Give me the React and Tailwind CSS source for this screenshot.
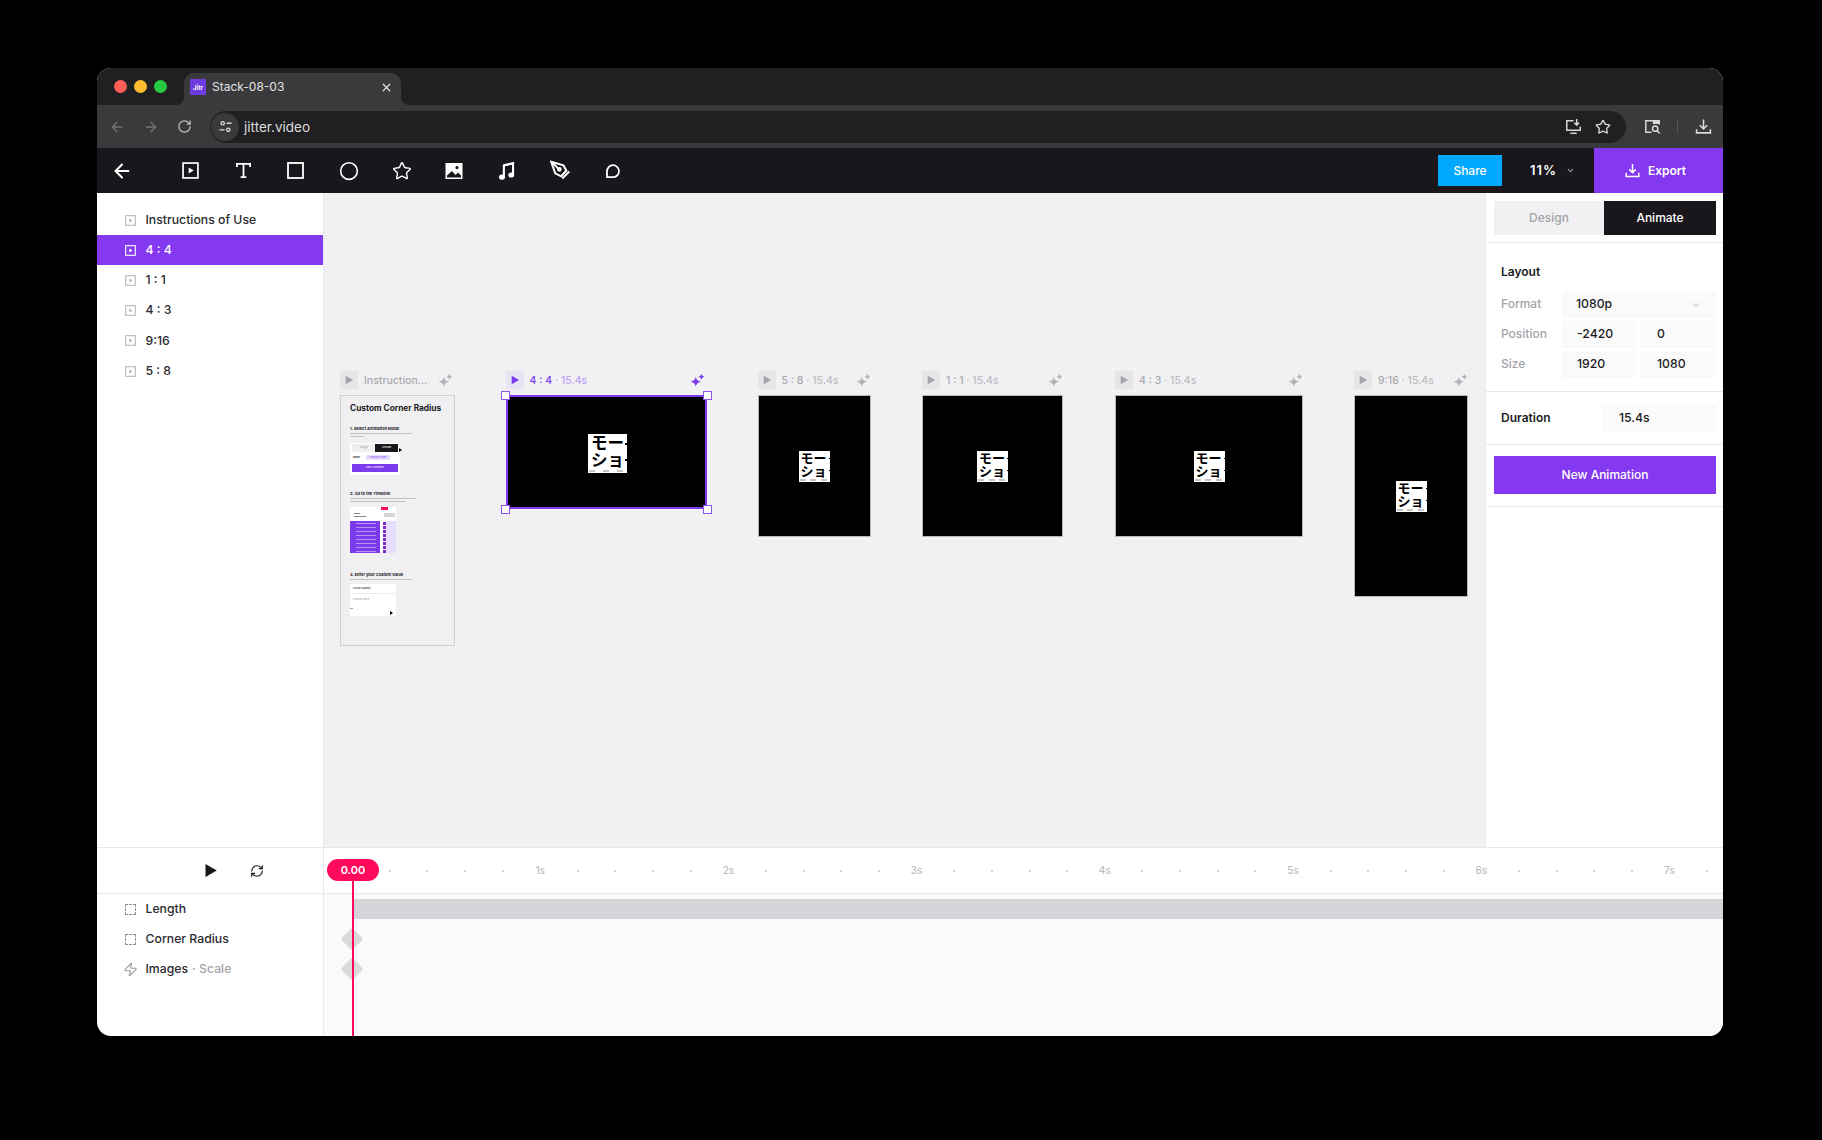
import React from 'react';
import { ArrowLeft, ArrowRight, RotateCw, Star, Circle, X, ChevronDown, RefreshCw, Zap } from 'lucide-react';

const SIDEBAR = ['Instructions of Use', '4 : 4', '1 : 1', '4 : 3', '9:16', '5 : 8'];

const FRAMES = [
  { label: '5 : 8', w: 'w-[113px]', h: 'h-[142px]' },
  { label: '1 : 1', w: 'w-[141px]', h: 'h-[142px]' },
  { label: '4 : 3', w: 'w-[188px]', h: 'h-[142px]' },
  { label: '9:16', w: 'w-[114px]', h: 'h-[202px]' },
];

function FrameIcon({ className }) {
  return (
    <svg viewBox="0 0 16 16" className={className} fill="none">
      <rect x="1" y="1" width="14" height="14" stroke="currentColor" strokeWidth="1.6" />
      <path d="M6.3 5.2v5.6L11 8z" fill="currentColor" />
    </svg>
  );
}

function Sparkle({ className }) {
  return (
    <svg viewBox="0 0 16 16" className={className} fill="currentColor">
      <path d="M6.200 4c.6 3 1.500 4.100 5.400 5.300-3.900 1.200-4.800 2.300-5.400 5.700-.6-3.400-1.500-4.500-5.400-5.700C4.700 8.100 5.600 7 6.200 4z" />
      <path d="M12.200.5c.4 2 1 2.700 3.300 3.400-2.300.7-2.900 1.400-3.300 3.500-.4-2.100-1-2.800-3.300-3.500C11.200 3.200 11.800 2.500 12.200.5z" />
    </svg>
  );
}

function PlayTri({ className }) {
  return (
    <svg viewBox="0 0 12 12" className={className} fill="currentColor">
      <path d="M2 .8v10.400L11 6z" />
    </svg>
  );
}

function FrameHeader({ label, active, width }) {
  const parts = label.split('|');
  return (
    <div className={`flex items-center h-[18px] mb-[6px] ${width}`}>
      <div className={`w-[18px] h-[18px] flex items-center justify-center ${active ? 'bg-[#e6e3f3] text-[#7c3aed]' : 'bg-[#e6e6e8] text-[#a6a6aa]'}`}>
        <PlayTri className="w-[10px] h-[10px]" />
      </div>
      <span className={`ml-[6px] mt-[1px] text-[10.500px] font-medium whitespace-nowrap ${active ? 'text-[#7c3aed]' : 'text-[#a9a9ad]'}`}>
        {parts[0]}
        {parts[1] && <span className={active ? 'text-[#c0a4f2]' : 'text-[#bdbdc1]'}> · {parts[1]}</span>}
      </span>
      <Sparkle className={`ml-auto w-[15px] h-[15px] ${active ? 'text-[#7c3aed]' : 'text-[#b4b4b8]'}`} />
    </div>
  );
}

// white motion tile shown in the middle of each frame
function Tile({ big }) {
  return (
    <div className={`relative bg-white text-black font-bold [font-family:'Noto_Sans_CJK_JP',sans-serif] ${big ? 'ml-[3px] mt-[3px] w-[39px] h-[39px] pl-[3px] text-[16.500px] leading-[17px]' : 'w-[31px] h-[31px] pl-[2px] text-[13px] leading-[13.500px]'}`}>
      <div className="whitespace-nowrap">モー</div>
      <div className="whitespace-nowrap">ショ</div>
      <div className={`absolute right-0 top-[24%] bg-black ${big ? 'w-[2px] h-[2px]' : 'w-[1px] h-[1px]'}`} />
      <div className={`absolute right-0 top-[64%] bg-black ${big ? 'w-[2px] h-[2px]' : 'w-[1px] h-[1px]'}`} />
      <div className={`absolute left-[1px] bottom-[1px] flex justify-between ${big ? 'w-[34px]' : 'w-[27px]'}`}>
        <div className="w-[6px] h-[2px] bg-[#c4c4c4]" />
        <div className="w-[6px] h-[2px] bg-[#c4c4c4]" />
        <div className="w-[6px] h-[2px] bg-[#c4c4c4]" />
      </div>
    </div>
  );
}

function Handle({ className }) {
  return <div className={`absolute w-[9px] h-[9px] bg-white border border-[#8b55ee] ${className}`} />;
}

function MiniHead({ children }) {
  return <div className="text-[4px] leading-[5px] font-bold text-[#1a1a1a] whitespace-nowrap">{children}</div>;
}

function MiniLines({ widths }) {
  return (
    <div className="mt-[2px] flex flex-col gap-[2px]">
      {widths.map((w, i) => (
        <div key={i} className={`h-[1px] bg-[#c2c2c6] ${w}`} />
      ))}
    </div>
  );
}

// tiny preview of the instructions artboard
function InstructionsDoc() {
  return (
    <div className="w-[115px] h-[251px] shrink-0 bg-[#f0f0f2] border border-[#cfcfd2] pl-[9px] pt-[7px] overflow-hidden">
      <div className="text-[8.300px] leading-[11px] font-bold text-[#1a1a1c] whitespace-nowrap">Custom Corner Radius</div>

      <div className="mt-[12px]"><MiniHead>1. Select Animation Mode</MiniHead></div>
      <MiniLines widths={['w-[62px]', 'w-[14px]']} />
      <div className="relative mt-[6px] w-[50px] h-[32px] bg-white pt-[1px] px-[2px]">
        <div className="flex h-[8px] text-[2.500px]">
          <div className="w-[23px] bg-[#f0f0f2] text-[#999] flex items-center justify-center">Design</div>
          <div className="w-[23px] bg-[#18181b] text-white flex items-center justify-center">Animate</div>
        </div>
        <div className="flex items-center mt-[3px] ml-[1px] h-[5px] text-[2.500px]">
          <span className="w-[13px] font-bold text-[#333]">Mode</span>
          <div className="w-[24px] h-[5px] bg-[#e6dcfb] text-[#7c3aed] flex items-center justify-center">Explore Mode</div>
        </div>
        <div className="mt-[4px] h-[8px] bg-[#7c3aed] text-[2.500px] text-white flex items-center justify-center">New Animation</div>
        <div className="absolute -right-[2px] top-[5px] w-0 h-0 border-y-[2px] border-l-[3px] border-y-transparent border-l-black" />
      </div>

      <div className="mt-[16px]"><MiniHead>2. Go to the Timeline</MiniHead></div>
      <MiniLines widths={['w-[66px]', 'w-[56px]']} />
      <div className="mt-[5px] w-[46px] h-[46px] bg-white flex flex-col">
        <div className="h-[14px] flex">
          <div className="w-[30px] pl-[4px] pt-[6px] flex flex-col gap-[2px]">
            <div className="w-[6px] h-[1px] bg-[#888]" />
            <div className="w-[12px] h-[1px] bg-[#888]" />
          </div>
          <div className="ml-[1px]">
            <div className="w-[7px] h-[3px] bg-[#ff0a5c]" />
            <div className="mt-[3px] ml-[3px] w-[11px] h-[4px] bg-[#d5d5d9]" />
          </div>
        </div>
        <div className="flex-1 flex">
          <div className="w-[30px] bg-[#7c3aed] flex flex-col justify-around pl-[6px]">
            {[0, 1, 2, 3, 4, 5, 6, 7].map((i) => (
              <div key={i} className="w-[20px] h-[1px] bg-[#b896f5]" />
            ))}
          </div>
          <div className="w-[3px]" />
          <div className="w-[3px] flex flex-col justify-around">
            {[0, 1, 2, 3, 4, 5, 6, 7].map((i) => (
              <div key={i} className="w-[3px] h-[3px] bg-[#7c2ad0]" />
            ))}
          </div>
          <div className="flex-1 bg-[#e6dcfb]" />
        </div>
      </div>

      <div className="mt-[19px]"><MiniHead>3. Enter your Custom Value</MiniHead></div>
      <MiniLines widths={['w-[62px]']} />
      <div className="relative mt-[4px] w-[46px] h-[32px] bg-white text-[2.500px] text-[#555]">
        <div className="h-[10px] border-b border-[#ececee] pl-[3px] flex items-center font-bold">Corner Radius</div>
        <div className="h-[11px] pl-[3px] flex items-center text-[#999]">Custom value</div>
        <div className="pl-[3px] w-[3px] h-[1px] mt-[3px] bg-[#aaa]" />
        <div className="absolute right-[3px] bottom-[1px] w-0 h-0 border-y-[2px] border-l-[3px] border-y-transparent border-l-black" />
      </div>
    </div>
  );
}

function Field({ className, value }) {
  return <div className={`h-[27px] bg-[#fafafa] flex items-center text-[12.250px] font-medium text-[#1c1c1f] ${className}`}>{value}</div>;
}

export default function App() {
  const ticks = Array.from({ length: 37 }, (_, i) => i);

  return (
    <div className="w-[1822px] h-[1140px] bg-black pt-[68px] pl-[97px] overflow-hidden [font-family:Inter,sans-serif]">
      <div className="w-[1626px] h-[968px] rounded-[14px] overflow-hidden bg-white flex flex-col">
        {/* Tab strip */}
        <div className="h-[37px] shrink-0 bg-[#202022] flex items-end">
          <div className="flex items-center gap-[7px] w-[87px] h-full pl-[17px]">
            <div className="w-[13px] h-[13px] rounded-full bg-[#ff5f57]" />
            <div className="w-[13px] h-[13px] rounded-full bg-[#febc2e]" />
            <div className="w-[13px] h-[13px] rounded-full bg-[#28c840]" />
          </div>
          <div className="relative w-[217px] h-[32px] bg-[#3a3a3c] rounded-t-[10px] flex items-center pl-[6px] pr-[8px] pb-[4px]">
            <div className="w-[16px] h-[16px] bg-[#6d3be0] flex items-center justify-center text-[6px] font-bold text-white">Jitr</div>
            <span className="ml-[6px] text-[12px] text-[#e4e4e6]">Stack-08-03</span>
            <X className="ml-auto w-[13px] h-[13px] text-[#e4e4e6]" strokeWidth={2.2} />
            <div className="absolute -left-[8px] bottom-0 w-[8px] h-[8px] bg-[#3a3a3c]">
              <div className="w-full h-full bg-[#202022] rounded-br-[8px]" />
            </div>
            <div className="absolute -right-[8px] bottom-0 w-[8px] h-[8px] bg-[#3a3a3c]">
              <div className="w-full h-full bg-[#202022] rounded-bl-[8px]" />
            </div>
          </div>
        </div>

        {/* Browser bar */}
        <div className="h-[43px] shrink-0 bg-[#3a3a3c] flex items-center">
          <div className="flex items-center w-[113px] pl-[12px]">
            <ArrowLeft className="w-[16px] h-[16px] text-[#747476]" />
            <ArrowRight className="ml-[18px] w-[16px] h-[16px] text-[#747476]" />
            <RotateCw className="ml-[18px] w-[15px] h-[15px] text-[#bdbdbf]" />
          </div>
          <div className="w-[1416px] h-[32px] rounded-full bg-[#202022] flex items-center pl-[1px]">
            <div className="w-[28px] h-[28px] rounded-full bg-[#3a3a3c] flex items-center justify-center">
              <svg viewBox="0 0 16 16" className="w-[15px] h-[15px] text-[#d8d8da]" fill="none" stroke="currentColor" strokeWidth="1.4">
                <circle cx="5" cy="4.500" r="1.800" />
                <path d="M9 4.500h5.500M1.500 11.500H7" />
                <circle cx="11" cy="11.500" r="1.800" />
              </svg>
            </div>
            <span className="ml-[5px] mt-[1px] text-[13.500px] text-[#dcdcde]">jitter.video</span>
            <svg viewBox="0 0 16 16" className="ml-auto w-[17px] h-[17px] text-[#d8d8da]" fill="none" stroke="currentColor" strokeWidth="1.400">
              <path d="M8 2.500H1.700v9h12.600V8M5 14.300h6M11 1v5.500M8.800 4.500 11 6.700l2.200-2.200" />
            </svg>
            <Star className="ml-[13px] mr-[15px] w-[16px] h-[16px] text-[#d8d8da]" strokeWidth={2} />
          </div>
          <svg viewBox="0 0 16 16" className="ml-[18px] w-[17px] h-[17px] text-[#d8d8da]" fill="none" stroke="currentColor" strokeWidth="1.400">
            <path d="M7 13.500H1.700v-11h12.600V6" />
            <path d="M9 2.500h5.300v2.500H9z" fill="currentColor" />
            <circle cx="10.500" cy="10" r="2.500" />
            <path d="m12.500 12 2.300 2.500" />
          </svg>
          <div className="ml-[16px] w-[1px] h-[15px] bg-[#55555a]" />
          <svg viewBox="0 0 16 16" className="ml-[17px] w-[17px] h-[17px] text-[#d8d8da]" fill="none" stroke="currentColor" strokeWidth="1.500">
            <path d="M8 1.500v8.500M4.500 6.800 8 10.300l3.500-3.500M1.500 10.500v3.500h13v-3.500" />
          </svg>
        </div>

        {/* App toolbar */}
        <div className="h-[45px] shrink-0 bg-[#19171b] flex items-center text-white">
          <ArrowLeft className="ml-[14px] w-[22px] h-[22px]" strokeWidth={2.200} />
          <div className="ml-[31px] flex items-center">
            <div className="w-[52.800px] flex justify-center"><FrameIcon className="w-[17px] h-[17px]" /></div>
            <div className="w-[52.800px] flex justify-center">
              <svg viewBox="0 0 16 16" className="w-[17px] h-[17px]" fill="none" stroke="currentColor" strokeWidth="1.700">
                <path d="M1.800 4.800V1.700h12.400v3.100M8 1.700v12.600M5.300 14.300h5.400" />
              </svg>
            </div>
            <div className="w-[52.800px] flex justify-center">
              <svg viewBox="0 0 17 17" className="w-[17px] h-[17px]" fill="none" stroke="currentColor" strokeWidth="1.800">
                <rect x="1" y="1" width="15" height="15" />
              </svg>
            </div>
            <div className="w-[52.800px] flex justify-center"><Circle className="w-[20px] h-[20px]" strokeWidth={1.900} /></div>
            <div className="w-[52.800px] flex justify-center"><Star className="w-[20px] h-[20px]" strokeWidth={1.700} /></div>
            <div className="w-[52.800px] flex justify-center">
              <svg viewBox="0 0 17 16" className="w-[18px] h-[16px]" fill="currentColor">
                <path fillRule="evenodd" d="M0 0h17v16H0zM11.500 3a1.600 1.600 0 1 0 0 3.200 1.600 1.600 0 0 0 0-3.200zM1.500 12.500v2h14v-2l-3-3-2.500 2.500-3.500-4z" />
              </svg>
            </div>
            <div className="w-[52.800px] flex justify-center">
              <svg viewBox="0 0 16 18" className="-ml-[1px] w-[17px] h-[19px]" fill="currentColor">
                <path d="M4.500 3.200 15.200.8v12.700h-2V3.500L6.500 5v10.500h-2z" />
                <ellipse cx="3.700" cy="15.300" rx="2.800" ry="2.400" />
                <ellipse cx="12.500" cy="13.300" rx="2.800" ry="2.400" />
              </svg>
            </div>
            <div className="w-[52.800px] flex justify-center">
              <svg viewBox="0 0 18 18" className="ml-[2px] w-[21px] h-[21px]" fill="none" stroke="currentColor" strokeWidth="1.700">
                <path d="M1 1.500 11.500 4.500 14 9l-4.500 5-5-2.500z" />
                <circle cx="8" cy="8" r="1.200" />
                <path d="M1.500 2 7 7.200M10.500 15.800l6-6" />
              </svg>
            </div>
            <div className="w-[52.800px] flex justify-center">
              <svg viewBox="0 0 16 16" className="w-[16px] h-[16px]" fill="none" stroke="currentColor" strokeWidth="1.800">
                <path d="M2 14.200h6.500a6 6 0 1 0-6.500-6z" strokeLinejoin="round" />
              </svg>
            </div>
          </div>
          <button className="ml-auto w-[64px] h-[31px] bg-[#00a8ff] text-[12px] font-medium text-white">Share</button>
          <div className="w-[92px] pl-[9px] flex items-center justify-center gap-[9px] text-[13px] font-semibold">
            <span className="tracking-[1px]">11%</span>
            <ChevronDown className="w-[9px] h-[9px] text-[#9b9b9f]" strokeWidth={3} />
          </div>
          <button className="w-[129px] h-full pr-[6px] bg-[#8439f0] flex items-center justify-center gap-[8px] text-[12px] font-semibold">
            <svg viewBox="0 0 16 16" className="w-[15px] h-[15px]" fill="none" stroke="currentColor" strokeWidth="1.600">
              <path d="M8 1v9M4.500 6.800 8 10.300l3.500-3.500M1.300 10.500v4h13.400v-4" />
            </svg>
            Export
          </button>
        </div>

        {/* Main area */}
        <div className="h-[654px] shrink-0 flex">
          <div className="w-[227px] shrink-0 border-r border-[#e8e8ea] pt-[12px]">
            {SIDEBAR.map((name) => {
              const active = name === '4 : 4';
              return (
                <div key={name} className={`h-[30.200px] flex items-center pl-[28px] text-[12.250px] font-medium ${active ? 'bg-[#8439f0] text-white' : 'text-[#2a2a2e]'}`}>
                  <FrameIcon className={`w-[11px] h-[11px] ${active ? 'text-white' : 'text-[#b8b8bb]'}`} />
                  <span className="ml-[9.500px]">{name}</span>
                </div>
              );
            })}
          </div>

          {/* Canvas */}
          <div className="flex-1 bg-[#f1f1f3] pl-[16px] pt-[178px] flex items-start overflow-hidden">
            <div className="w-[115px] shrink-0">
              <FrameHeader label="Instruction..." width="w-[113px]" />
              <InstructionsDoc />
            </div>
            <div className="ml-[50.500px] w-[200px] shrink-0">
              <FrameHeader label="4 : 4|15.4s" active width="w-[199px]" />
              <div className="relative w-[201px] h-[114px] bg-black border-2 border-[#7c3aed] flex items-center justify-center">
                <Tile big />
                <Handle className="-left-[7px] -top-[6px]" />
                <Handle className="-right-[7px] -top-[6px]" />
                <Handle className="-left-[7px] -bottom-[7px]" />
                <Handle className="-right-[7px] -bottom-[7px]" />
              </div>
            </div>
            {FRAMES.map((f, i) => (
              <div key={f.label} className={`shrink-0 ${f.w} ${i === 1 ? 'ml-[51.500px]' : i === 3 ? 'ml-[51px]' : 'ml-[52px]'}`}>
                <FrameHeader label={`${f.label}|15.4s`} width="w-full" />
                <div className={`w-full ${f.h} bg-black border border-[#b9b9bc] flex items-center justify-center`}>
                  <Tile />
                </div>
              </div>
            ))}
          </div>

          {/* Right panel */}
          <div className="w-[238px] shrink-0 border-l border-[#e8e8ea] bg-white">
            <div className="h-[50px] border-b border-[#e8e8ea] pl-[8px] pr-[7px] pt-[8px]">
              <div className="flex h-[34px] text-[12px] font-medium">
                <div className="w-[110px] bg-[#f1f1f3] text-[#a3a3a8] flex items-center justify-center">Design</div>
                <div className="w-[112px] bg-[#19171b] text-white flex items-center justify-center">Animate</div>
              </div>
            </div>
            <div className="h-[149px] border-b border-[#e8e8ea] pl-[15px] pr-[7px] pt-[20px] text-[12px]">
              <div className="h-[18px] flex items-center font-semibold text-[#1c1c1f]">Layout</div>
              <div className="mt-[10px] flex items-center">
                <span className="w-[61px] -mt-[1px] text-[#a3a3a8] font-medium">Format</span>
                <Field className="w-[154px] pl-[14px] pr-[14px] justify-between" value={<>1080p<ChevronDown className="w-[12px] h-[12px] text-[#b8b8bb]" /></>} />
              </div>
              <div className="mt-[3px] flex items-center">
                <span className="w-[61px] -mt-[1px] text-[#a3a3a8] font-medium">Position</span>
                <Field className="w-[74px] pl-[15px]" value="-2420" />
                <Field className="ml-[4px] w-[76px] pl-[17px]" value="0" />
              </div>
              <div className="mt-[3px] flex items-center">
                <span className="w-[61px] -mt-[1px] text-[#a3a3a8] font-medium">Size</span>
                <Field className="w-[74px] pl-[15px]" value="1920" />
                <Field className="ml-[4px] w-[76px] pl-[17px]" value="1080" />
              </div>
            </div>
            <div className="h-[53px] border-b border-[#e8e8ea] pl-[15px] pr-[7px] flex items-center justify-between">
              <span className="text-[12px] font-semibold text-[#1c1c1f]">Duration</span>
              <Field className="w-[113px] pl-[16px]" value="15.4s" />
            </div>
            <div className="h-[62px] border-b border-[#e8e8ea] pl-[8px] pr-[7px] pt-[11px]">
              <button className="w-[222px] h-[38px] bg-[#8439f0] text-white text-[12px] font-medium">New Animation</button>
            </div>
          </div>
        </div>

        {/* Timeline */}
        <div className="flex-1 flex border-t border-[#e8e8ea]">
          <div className="w-[227px] shrink-0 border-r border-[#e8e8ea]">
            <div className="h-[46px] border-b border-[#e8e8ea] flex items-center pl-[106px] text-[#19171b]">
              <PlayTri className="w-[15px] h-[15px]" />
              <RefreshCw className="ml-[32px] w-[14px] h-[14px]" strokeWidth={2} />
            </div>
            {[
              { name: 'Length', icon: 'box' },
              { name: 'Corner Radius', icon: 'box' },
              { name: 'Images', sub: 'Scale', icon: 'bolt' },
            ].map((row) => (
              <div key={row.name} className="h-[30.200px] flex items-center pl-[28px] text-[12.250px] font-medium text-[#2a2a2e]">
                {row.icon === 'box' ? (
                  <div className="w-[11px] h-[11px] border border-dashed border-[#8e8e92]" />
                ) : (
                  <Zap className="-mx-[2px] w-[15px] h-[15px] text-[#9a9a9e]" strokeWidth={1.800} />
                )}
                <span className="ml-[9.500px]">{row.name}</span>
                {row.sub && <span className="ml-[4px] text-[#a3a3a8]">· {row.sub}</span>}
              </div>
            ))}
          </div>

          <div className="relative flex-1 overflow-hidden bg-[#fafafa]">
            <div className="h-[46px] bg-white border-b border-[#e8e8ea] flex items-center pl-[9.200px]">
              {ticks.map((t) => (
                <div key={t} className="w-[37.650px] shrink-0 flex justify-center text-[10px] font-medium text-[#bdbdc1]">
                  {t % 5 === 0 && t > 0 ? `${t / 5}s` : <div className="w-[2px] h-[2px] bg-[#c4c4c8] rounded-full" />}
                </div>
              ))}
            </div>
            <div className="ml-[30px] mt-[5px] h-[20px] bg-[#d5d5d9]" />
            <div className="ml-[20px] mt-[12px] w-[16px] h-[16px] rotate-45 rounded-[2px] bg-[#d9d9dc]" />
            <div className="ml-[20px] mt-[14px] w-[16px] h-[16px] rotate-45 rounded-[2px] bg-[#d9d9dc]" />

            {/* Playhead */}
            <div className="absolute left-[28px] top-[33px] bottom-0 w-[2px] bg-[#ff0a5c]" />
            <div className="absolute left-[3px] top-[11px] w-[52px] h-[22px] rounded-full bg-[#ff0a5c] flex items-center justify-center text-[11px] font-semibold text-white">0.00</div>
          </div>
        </div>
      </div>
    </div>
  );
}
